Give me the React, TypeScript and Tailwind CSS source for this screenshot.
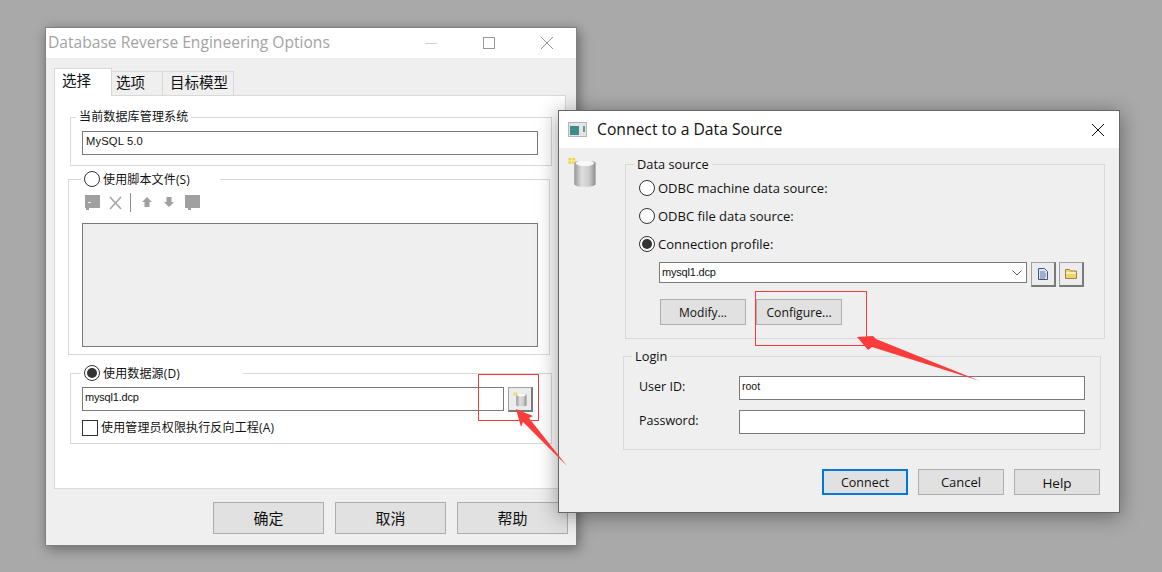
import React from 'react';

const ui = "font-['Open_Sans','Noto_Sans_CJK_SC',sans-serif]";
const mono = "font-['Liberation_Sans',sans-serif]";

const Radio: React.FC<{ checked?: boolean }> = ({ checked }) => (
  <span className="flex h-[16px] w-[16px] shrink-0 items-center justify-center rounded-full border border-[#333] bg-white">
    {checked && <span className="h-[10px] w-[10px] rounded-full bg-[#333]" />}
  </span>
);

const Button: React.FC<{ label: string; className: string; primary?: boolean }> = ({ label, className, primary }) => (
  <button
    className={`flex items-center justify-center bg-[#e1e1e1] text-[#111] ${
      primary ? 'border-2 border-[#0078d7]' : 'border border-[#adadad]'
    } ${className}`}
  >
    {label}
  </button>
);

const Field: React.FC<{ value?: string; className: string }> = ({ value, className }) => (
  <div className={`border border-[#7a7a7a] bg-white leading-[14px] text-[#111] ${mono} ${className}`}>
    {value}
  </div>
);

const Cylinder: React.FC<{ className: string; id: string }> = ({ className, id }) => (
  <svg viewBox="0 0 28 32" className={className}>
    <defs>
      <linearGradient id={id} x1="0" x2="1" y1="0" y2="0">
        <stop offset="0" stopColor="#969696" />
        <stop offset="0.35" stopColor="#dedede" />
        <stop offset="0.7" stopColor="#cccccc" />
        <stop offset="1" stopColor="#8c8c8c" />
      </linearGradient>
    </defs>
    <path d="M6 6c0-3 22-3 22 0v22c0 3.500-22 3.500-22 0z" fill={`url(#${id})`} />
    <ellipse cx="17" cy="6.500" rx="9.500" ry="3" fill="#f8f8f8" />
    <rect x="0" y="1" width="7" height="6" fill="#f0d050" />
    <path d="M3.500 1v6M0 4h7" stroke="#fff3b0" strokeWidth="1" />
  </svg>
);

const IconButton: React.FC<{ children: React.ReactNode }> = ({ children }) => (
  <button className="flex h-[25px] w-[25px] items-center justify-center border border-r-2 border-b-2 border-t-[#a0a0a0] border-l-[#a0a0a0] border-r-[#7a7a7a] border-b-[#7a7a7a] bg-[#ececec]">
    {children}
  </button>
);

const Toolbar = () => (
  <svg width="118" height="19" viewBox="0 0 118 19" className="block" fill="#a0a0a0">
    <path d="M3 2h15v13H7v2H4v-2H3z" />
    <path d="M6 9h3v1H6z" fill="#eee" />
    <path d="M28 4l11 12M39 4L28 16" stroke="#a6a6a6" strokeWidth="1.600" fill="none" />
    <rect x="48" y="0" width="1" height="19" fill="#8f8f8f" />
    <path d="M65 4l5 5h-2.500v5h-5V9H60z" />
    <path d="M87 14l5-5h-2.500V4h-5v5H82z" />
    <path d="M103 2h15v13h-9v2h-3v-2h-3z" />
  </svg>
);

const DesktopAnnotations = () => (
  <svg width="1162" height="572" viewBox="0 0 1162 572" className="pointer-events-none absolute left-0 top-0 z-20">
    <path d="M516 409L533 416L529 418L567 466L523 422L521 427z" fill="#fb3c3c" />
    <path d="M857 337L873 336L876 339L980 381L872 347L868 350z" fill="#fb3c3c" />
  </svg>
);

export default function App() {
  return (
    <div className={`relative h-[572px] w-[1162px] overflow-hidden bg-[#a9a9a9] ${ui}`}>
      {/* Options window */}
      <div className="absolute left-[45px] top-[27px] flex h-[519px] w-[532px] flex-col border border-[#808080] bg-[#efefef] shadow-[2px_3px_12px_rgba(0,0,0,0.4)]">
        <div className="flex h-[30px] items-center bg-white pl-[2px] text-[15.600px] text-[#a3a3a3]">
          <span>Database Reverse Engineering Options</span>
          <div className="ml-auto flex">
            <div className="flex h-[30px] w-[58px] items-center justify-center">
              <div className="h-px w-[12px] bg-[#d0d0d0]" />
            </div>
            <div className="flex h-[30px] w-[58px] items-center justify-center">
              <div className="h-[12px] w-[12px] border border-[#999]" />
            </div>
            <div className="flex h-[30px] w-[58px] items-center justify-center">
              <svg width="12" height="12" viewBox="0 0 12 12" stroke="#999" fill="none"><path d="M0 0l12 12M12 0L0 12" /></svg>
            </div>
          </div>
        </div>

        <div className="ml-[8px] mt-[10px] flex h-[27px] items-end text-[14.500px] text-[#111]">
          <div className="relative z-10 -mb-px h-[28px] w-[58px] border border-b-0 border-[#d9d9d9] bg-white pl-[7px] pt-px">选择</div>
          <div className="h-[24px] w-[51px] border border-b-0 border-l-0 border-[#d9d9d9] pl-[4px]">选项</div>
          <div className="h-[24px] w-[71px] border border-b-0 border-l-0 border-[#d9d9d9] pl-[7px]">目标模型</div>
        </div>

        <div className="ml-[8px] h-[394px] w-[512px] border border-[#d9d9d9] bg-white text-[12px] tracking-[0.15px] text-[#111]">
          <div className="ml-[15px] mt-[21px] h-[49px] w-[482px] border border-[#d9d9d9]">
            <div className="-mt-[9px] ml-[5px] h-[16px] w-fit bg-white px-[3px] leading-[16px]">当前数据库管理系统</div>
            <Field value="MySQL 5.0" className="ml-[11px] mt-[6px] h-[24px] w-[456px] pl-[3px] pt-[2px] text-[11.200px]" />
          </div>

          <div className="ml-[13px] mt-[13px] h-[176px] w-[482px] border border-[#d9d9d9]">
            <div className="-mt-[9px] ml-[12px] flex h-[16px] w-[139px] items-center gap-[3px] bg-white px-[3px]">
              <Radio />
              <span className="pt-[2px]">使用脚本文件(S)</span>
            </div>
            <div className="ml-[13px] mt-[6px]">
              <Toolbar />
            </div>
            <div className="ml-[13px] mt-[11px] h-[124px] w-[456px] border border-[#7a7a7a] bg-[#efefef]" />
          </div>

          <div className="ml-[15px] mt-[18px] h-[71px] w-[482px] border border-[#d9d9d9]">
            <div className="-mt-[9px] ml-[10px] flex h-[16px] w-[162px] items-center gap-[3px] bg-white px-[3px]">
              <Radio checked />
              <span className="pt-[2px]">使用数据源(D)</span>
            </div>
            <div className="ml-[11px] mt-[6px] flex gap-[4px]">
              <Field value="mysql1.dcp" className="h-[24px] w-[422px] pl-[2px] pt-[2px] text-[11px] tracking-[-0.2px]" />
              <IconButton>
                <Cylinder id="cyl-small" className="h-[15px] w-[14px]" />
              </IconButton>
            </div>
            <div className="ml-[11px] mt-[8px] flex h-[16px] items-center gap-[3px]">
              <span className="h-[16px] w-[16px] border border-[#333] bg-white" />
              <span>使用管理员权限执行反向工程(A)</span>
            </div>
          </div>
        </div>

        <div className="mt-[13px] flex justify-end gap-[11px] pr-[8px] text-[15px]">
          <Button label="确定" className="h-[32px] w-[111px]" />
          <Button label="取消" className="h-[32px] w-[111px]" />
          <Button label="帮助" className="h-[32px] w-[111px]" />
        </div>
      </div>

      {/* Connect window */}
      <div className="absolute left-[558px] top-[110px] z-10 flex h-[403px] w-[562px] flex-col border border-[#666] bg-[#efefef] text-[12.500px] text-[#111] shadow-[0_3px_20px_rgba(0,0,0,0.4)]">
        <div className="flex h-[37px] items-center bg-white pl-[9px] pr-[15px]">
          <svg width="20" height="16" viewBox="0 0 20 16" className="shrink-0">
            <rect x="0.500" y="0.500" width="18" height="14" fill="#e4e4e4" stroke="#b5b5b5" />
            <rect x="2" y="4" width="9" height="9" fill="#3f8a8a" />
            <rect x="15" y="4" width="2" height="6" fill="#5aa08a" />
          </svg>
          <span className="ml-[9px] text-[15.700px] text-[#111]">Connect to a Data Source</span>
          <svg width="12" height="12" viewBox="0 0 12 12" stroke="#111" fill="none" className="ml-auto">
            <path d="M0 0l12 12M12 0L0 12" />
          </svg>
        </div>

        <div className="mt-[16px] flex">
          <div className="w-[66px] pl-[9px]">
            <Cylinder id="cyl-large" className="-mt-[7px] h-[31px] w-[28px]" />
          </div>
          <div className="h-[175px] w-[480px] border border-[#d9d9d9]">
            <div className="-mt-[9px] ml-[8px] h-[16px] w-fit bg-[#efefef] px-[3px] text-[12.800px] leading-[16px]">Data source</div>
            <div className="ml-[13px] mt-[8px] flex h-[16px] items-center gap-[3px] text-[13px]">
              <Radio />
              <span className="pt-[2px]">ODBC machine data source:</span>
            </div>
            <div className="ml-[13px] mt-[12px] flex h-[16px] items-center gap-[3px] text-[13px]">
              <Radio />
              <span className="pt-[2px]">ODBC file data source:</span>
            </div>
            <div className="ml-[13px] mt-[12px] flex h-[16px] items-center gap-[3px] text-[13px]">
              <Radio checked />
              <span className="pt-[2px]">Connection profile:</span>
            </div>
            <div className="ml-[33px] mt-[10px] flex items-start gap-[4px]">
              <div className={`flex h-[21px] w-[368px] items-center justify-between border border-[#7a7a7a] bg-white pl-[2px] pr-[4px] text-[11px] tracking-[-0.2px] ${mono}`}>
                <span>mysql1.dcp</span>
                <svg width="10" height="6" viewBox="0 0 10 6" stroke="#555" fill="none"><path d="M0.500 0.500L5 5L9.500 0.500" /></svg>
              </div>
              <IconButton>
                <svg width="10" height="12" viewBox="0 0 10 12">
                  <path d="M0.500 0.500h6l3 3v8h-9z" fill="#dfe6f2" stroke="#3d5688" />
                  <path d="M2 4h5M2 6h6M2 8h6M2 10h5" stroke="#5f76a3" />
                </svg>
              </IconButton>
              <div className="-ml-px">
                <IconButton>
                  <svg width="12" height="10" viewBox="0 0 12 10">
                    <path d="M0.500 9.500v-9h4l1 1.500h6v7.500z" fill="#f6d264" stroke="#9b8450" />
                    <rect x="1" y="3" width="10" height="2" fill="#fbeeb0" />
                  </svg>
                </IconButton>
              </div>
            </div>
            <div className="ml-[34px] mt-[12px] flex gap-[10px]">
              <Button label="Modify..." className="h-[26px] w-[86px] pt-[2px] text-[12px]" />
              <Button label="Configure..." className="h-[26px] w-[86px] pt-[2px] text-[12.200px]" />
            </div>
          </div>
        </div>

        <div className="ml-[64px] mt-[17px] h-[94px] w-[478px] border border-[#d9d9d9]">
          <div className="-mt-[9px] ml-[8px] h-[16px] w-fit bg-[#efefef] px-[3px] text-[12.800px] leading-[16px]">Login</div>
          <div className="ml-[15px] mt-[12px] flex items-center">
            <span className="w-[100px] pb-[2px]">User ID:</span>
            <Field value="root" className="h-[24px] w-[346px] pl-[2px] pt-[2px] text-[10.500px]" />
          </div>
          <div className="ml-[15px] mt-[10px] flex items-center">
            <span className="w-[100px] pb-[2px]">Password:</span>
            <Field className="h-[24px] w-[346px]" />
          </div>
        </div>

        <div className="mt-[19px] flex justify-end gap-[10px] pr-[19px]">
          <Button primary label="Connect" className="h-[26px] w-[86px] pt-[2px]" />
          <Button label="Cancel" className="h-[26px] w-[86px] pt-[2px] text-[13px]" />
          <Button label="Help" className="h-[26px] w-[86px] pt-[2px] text-[13.500px]" />
        </div>
      </div>

      {/* Red callouts drawn over the screenshot */}
      <div className="absolute left-[478px] top-[374px] z-[5] h-[47px] w-[61px] border border-[#f83a3a]" />
      <div className="absolute left-[755px] top-[291px] z-20 h-[55px] w-[112px] border border-[#f83a3a]" />
      <DesktopAnnotations />
    </div>
  );
}
